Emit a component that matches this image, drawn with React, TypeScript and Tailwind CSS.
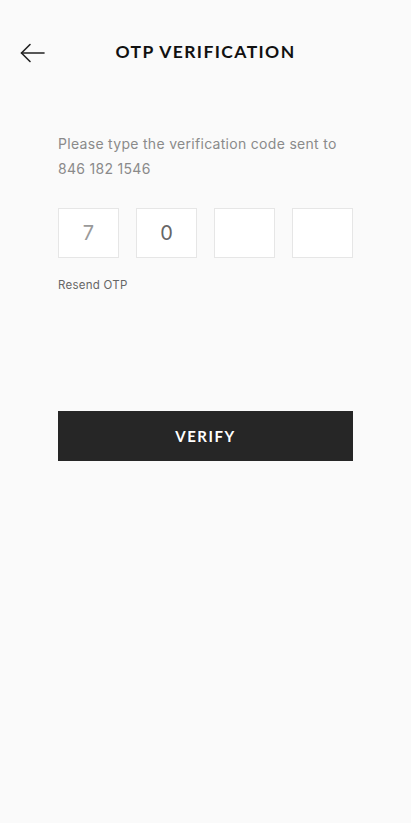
export default function App() {
  return (
    <div className="min-h-[823px] w-full bg-[#fafafa]" style={{ fontFamily: 'Inter, "Noto Sans", sans-serif' }}>
      <div className="relative flex h-[105px] items-center justify-center">
        <button className="absolute left-[20px] top-[42px] text-[#222]" aria-label="Back">
          <svg width="25" height="22" viewBox="0 0 25 22" fill="none" stroke="currentColor" strokeWidth="1.6" strokeLinecap="round" strokeLinejoin="round">
            <path d="M24 11H1.5" />
            <path d="M10 2.5L1.5 11l8.5 8.5" />
          </svg>
        </button>
        <h1
          className="text-[17.5px] font-bold tracking-[1.4px] text-[#111]"
          style={{ fontFamily: 'Lato, "Noto Sans", sans-serif' }}
        >
          OTP VERIFICATION
        </h1>
      </div>

      <div className="px-[58px] pt-[26px]">
        <p className="text-[14px] leading-[25px] tracking-[0.3px] text-[#8a8a8a]">
          Please type the verification code sent to
          <br />
          846 182 1546
        </p>

        <div className="mt-[27px] flex gap-[17px]">
          {['7', '0', '', ''].map((d, i) => (
            <div
              key={i}
              className={`flex h-[50px] w-[61px] items-center justify-center border border-[#e6e6e6] bg-white text-[20px] ${
                i === 0 ? 'text-[#9a9a9a]' : 'text-[#666]'
              }`}
            >
              {d}
            </div>
          ))}
        </div>

        <p className="mt-[19px] text-[11.5px] tracking-[0.25px] text-[#666]">Resend OTP</p>

        <button
          className="mt-[117px] flex h-[50px] w-full items-center justify-center bg-[#262626] text-[15px] font-bold tracking-[1.5px] text-white"
          style={{ fontFamily: 'Lato, "Noto Sans", sans-serif' }}
        >
          VERIFY
        </button>
      </div>
    </div>
  );
}
